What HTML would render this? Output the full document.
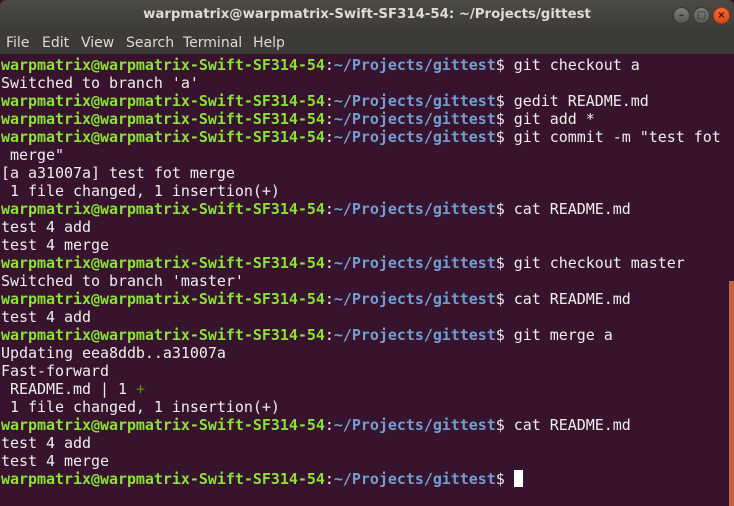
<!DOCTYPE html>
<html><head><style>
*{margin:0;padding:0}
body{width:734px;height:506px;overflow:hidden;background:#37132e;position:relative;font-family:"DejaVu Sans",sans-serif}
#title{position:absolute;left:0;top:0;width:734px;height:30px;background:linear-gradient(#4b4a45,#3d3c38);border-radius:6px 6px 0 0;color:#dfdbd2;font-weight:bold;font-size:13.3px;text-align:center;line-height:30px}
#menu{position:absolute;left:0;top:30px;width:734px;height:24px;background:#3c3b37;color:#dfdbd2;font-size:14px;line-height:26px}
#menu span{position:absolute;top:0}
.btn{position:absolute;top:7px;width:15px;height:15px;border-radius:50%;background:linear-gradient(#7d7c78,#5a5955);border:1px solid #3a3935;color:#2e2d2a;font-size:10px;text-align:center;line-height:15px}
#term{position:absolute;left:1px;top:56px;font-family:"DejaVu Sans Mono",monospace;font-size:15px;letter-spacing:-0.035px;line-height:18px;color:#eeeeec;white-space:pre}
.g{color:#8ae234;font-weight:bold}.b{color:#729fcf;font-weight:bold}
.cur{display:inline-block;width:9px;height:17px;background:#fff;vertical-align:-3px}
#sb{position:absolute;left:729px;top:281px;width:5px;height:225px;background:#c8613f}
</style></head><body>
<div id="title">warpmatrix@warpmatrix-Swift-SF314-54: ~/Projects/gittest
<div class="btn" style="left:673px">–</div>
<div class="btn" style="left:693px">□</div>
<div class="btn" style="left:713px;background:linear-gradient(#f26b3a,#dd4814);border-color:#a83a10;color:#3a1a0a">×</div>
</div>
<div id="menu"><span style="left:6px">File</span><span style="left:42px">Edit</span><span style="left:81px">View</span><span style="left:126px">Search</span><span style="left:183px">Terminal</span><span style="left:253px">Help</span></div>
<div id="term"><span class="g">warpmatrix@warpmatrix-Swift-SF314-54</span>:<span class="b">~/Projects/gittest</span>$ git checkout a
Switched to branch 'a'
<span class="g">warpmatrix@warpmatrix-Swift-SF314-54</span>:<span class="b">~/Projects/gittest</span>$ gedit README.md
<span class="g">warpmatrix@warpmatrix-Swift-SF314-54</span>:<span class="b">~/Projects/gittest</span>$ git add *
<span class="g">warpmatrix@warpmatrix-Swift-SF314-54</span>:<span class="b">~/Projects/gittest</span>$ git commit -m "test fot
 merge"
[a a31007a] test fot merge
 1 file changed, 1 insertion(+)
<span class="g">warpmatrix@warpmatrix-Swift-SF314-54</span>:<span class="b">~/Projects/gittest</span>$ cat README.md
test 4 add
test 4 merge
<span class="g">warpmatrix@warpmatrix-Swift-SF314-54</span>:<span class="b">~/Projects/gittest</span>$ git checkout master
Switched to branch 'master'
<span class="g">warpmatrix@warpmatrix-Swift-SF314-54</span>:<span class="b">~/Projects/gittest</span>$ cat README.md
test 4 add
<span class="g">warpmatrix@warpmatrix-Swift-SF314-54</span>:<span class="b">~/Projects/gittest</span>$ git merge a
Updating eea8ddb..a31007a
Fast-forward
 README.md | 1 <span style="color:#4e9a06">+</span>
 1 file changed, 1 insertion(+)
<span class="g">warpmatrix@warpmatrix-Swift-SF314-54</span>:<span class="b">~/Projects/gittest</span>$ cat README.md
test 4 add
test 4 merge
<span class="g">warpmatrix@warpmatrix-Swift-SF314-54</span>:<span class="b">~/Projects/gittest</span>$ <span class="cur"></span></div>
<div id="sb"></div>
</body></html>
